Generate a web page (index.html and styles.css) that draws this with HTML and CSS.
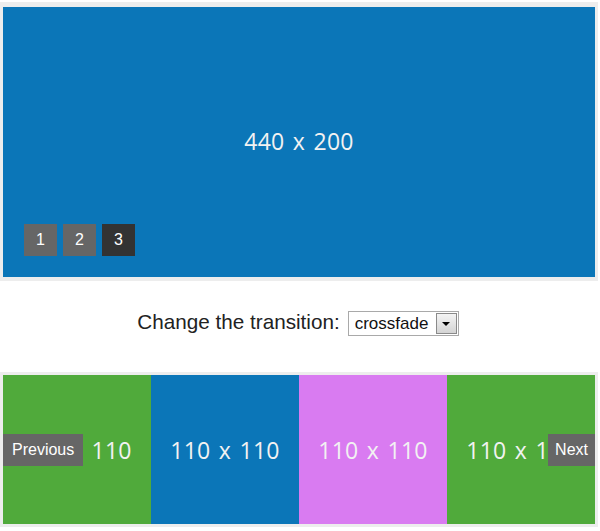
FILE: index.html
```html
<!DOCTYPE html>
<html lang="en">
<head>
    <meta charset="UTF-8">
    <meta name="viewport" content="width=device-width, initial-scale=1.0">
    <title>Slider demo</title>
    <link rel="stylesheet" href="styles.css">
</head>
<body>

<!-- Main slideshow -->
<div class="slideshow">
    <div class="slide-main">
        <span class="slide-label">440 x 200</span>
        <div class="pager">
            <a class="pager-item">1</a>
            <a class="pager-item">2</a>
            <a class="pager-item active">3</a>
        </div>
    </div>
</div>

<!-- Transition picker -->
<div class="controls">
    <label for="transition">Change the transition:</label>
    <div class="select-wrap">
        <select id="transition">
            <option>crossfade</option>
            <option>slide</option>
            <option>fade</option>
        </select>
        <span class="select-arrow"></span>
    </div>
</div>

<!-- Carousel -->
<div class="carousel">
    <div class="track">
        <div class="item green"><span>110 x 110</span></div>
        <div class="item blue"><span>110 x 110</span></div>
        <div class="item pink"><span>110 x 110</span></div>
        <div class="item green"><span>110 x 110</span></div>
    </div>
    <a class="nav prev">Previous</a>
    <a class="nav next">Next</a>
</div>

</body>
</html>
```

FILE: styles.css
```css
body {
    margin: 0;
    padding-top: 2px;
    background-color: #fff;
    font-family: "Liberation Sans", Arial, sans-serif;
}
.slideshow {
    width: 592px;
    padding: 5px 3px 4px 3px;
    background-color: #ededed;
}
.slide-main {
    position: relative;
    height: 270px;
    background-color: #0b76b8;
    display: flex;
    align-items: center;
    justify-content: center;
}
.slide-label, .item span {
    font-family: "Open Sans", sans-serif;
    font-size: 23px;
    letter-spacing: 0.3px;
    word-spacing: 2px;
    color: #f2f2f2;
    white-space: nowrap;
}
.slide-label {
    margin-top: -2px;
}
.pager {
    position: absolute;
    left: 21px;
    bottom: 21px;
    display: flex;
    gap: 6px;
}
.pager-item {
    width: 33px;
    height: 32px;
    line-height: 32px;
    text-align: center;
    background-color: #666;
    color: #fff;
    font-size: 16px;
}
.pager-item.active {
    background-color: #333;
}
.controls {
    height: 81px;
    padding: 0 4px 10px 0;
    display: flex;
    align-items: center;
    justify-content: center;
    gap: 8px;
    font-size: 20.7px;
    color: #222;
}
.select-wrap {
    display: flex;
    align-items: center;
    width: 109px;
    height: 23px;
    border: 1px solid #a9a9a9;
    background-color: #fff;
    margin-top: 3px;
}
.select-wrap select {
    appearance: none;
    -webkit-appearance: none;
    border: none;
    outline: none;
    background: transparent;
    flex: 1;
    min-width: 0;
    padding: 0 0 0 6px;
    font-family: "Liberation Sans", Arial, sans-serif;
    font-size: 17px;
    color: #111;
}
.select-arrow {
    position: relative;
    width: 19px;
    height: 19px;
    margin-right: 1px;
    border: 1px solid #8a8a8a;
    background: linear-gradient(#f4f4f4, #d4d4d4);
}
.select-arrow::after {
    content: "";
    position: absolute;
    left: 5px;
    top: 8px;
    border-left: 4px solid transparent;
    border-right: 4px solid transparent;
    border-top: 4px solid #000;
}
.carousel {
    position: relative;
    width: 592px;
    padding: 3px 3px 3px 3px;
    background-color: #ededed;
}
.track {
    display: flex;
    height: 149px;
}
.item {
    width: 148px;
    display: flex;
    align-items: center;
    justify-content: center;
    overflow: hidden;
}
.green { background-color: #50aa3b; }
.blue { background-color: #0b76b8; }
.pink { background-color: #d97bf1; }
.nav {
    position: absolute;
    top: 62px;
    height: 32px;
    line-height: 32px;
    padding: 0 9px;
    background-color: #666;
    color: #fff;
    font-size: 16px;
}
.prev { left: 3px; }
.next { right: 3px; padding: 0 7px; }
```
